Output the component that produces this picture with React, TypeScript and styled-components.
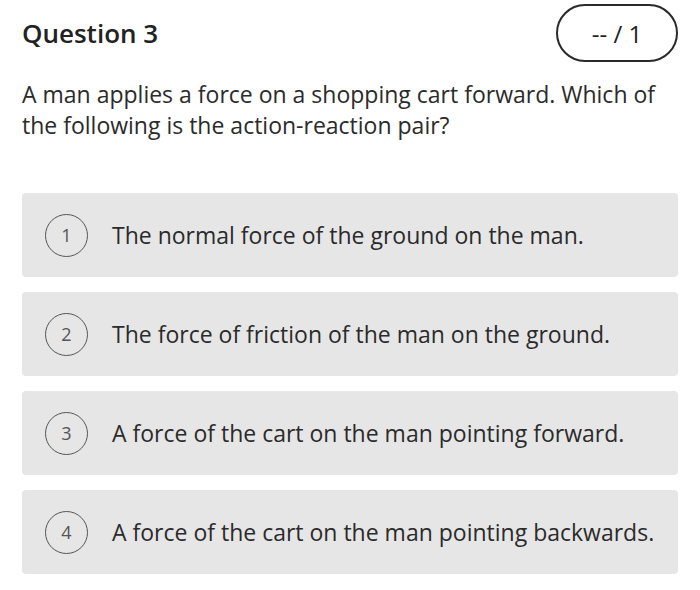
import styled, { createGlobalStyle } from 'styled-components';

const GlobalStyle = createGlobalStyle`
  body {
    margin: 0;
    background: #fff;
    font-family: 'Open Sans', 'Noto Sans', sans-serif;
    color: #2b2b2b;
  }
`;

const options = [
  'The normal force of the ground on the man.',
  'The force of friction of the man on the ground.',
  'A force of the cart on the man pointing forward.',
  'A force of the cart on the man pointing backwards.',
];

const App = () => {
  return (
    <>
      <GlobalStyle />
      <Page>
        <Header>
          <Title>Question 3</Title>
          <Score>-- / 1</Score>
        </Header>
        <Prompt>
          A man applies a force on a shopping cart forward. Which of the following is the
          action-reaction pair?
        </Prompt>
        <Options>
          {options.map((text, i) => (
            <Option key={i}>
              <Number>{i + 1}</Number>
              <OptionText>{text}</OptionText>
            </Option>
          ))}
        </Options>
      </Page>
    </>
  );
};

const Page = styled.div`
  padding: 4px 22px 0 22px;
`;
const Header = styled.div`
  display: flex;
  justify-content: space-between;
  align-items: center;
  height: 58px;
`;
const Title = styled.div`
  font-size: 26px;
  font-weight: 600;
  color: #222;
`;
const Score = styled.div`
  width: 118px;
  height: 54px;
  border: 2px solid #2a2a2a;
  border-radius: 29px;
  display: flex;
  align-items: center;
  justify-content: center;
  font-size: 24px;
  color: #222;
`;
const Prompt = styled.p`
  margin: 17px 0 0 0;
  font-size: 23px;
  line-height: 31px;
  color: #2b2b2b;
  max-width: 650px;
`;
const Options = styled.div`
  display: flex;
  flex-direction: column;
  gap: 15px;
  margin-top: 52px;
`;
const Option = styled.div`
  display: flex;
  align-items: center;
  height: 84px;
  background: #e6e6e6;
  border-radius: 4px;
  padding-left: 23px;
`;
const Number = styled.div`
  width: 41px;
  height: 41px;
  border: 1.5px solid #555;
  border-radius: 50%;
  display: flex;
  align-items: center;
  justify-content: center;
  font-size: 18px;
  color: #555;
  flex-shrink: 0;
`;
const OptionText = styled.div`
  margin-left: 24px;
  font-size: 23px;
  color: #2b2b2b;
`;

export default App;
